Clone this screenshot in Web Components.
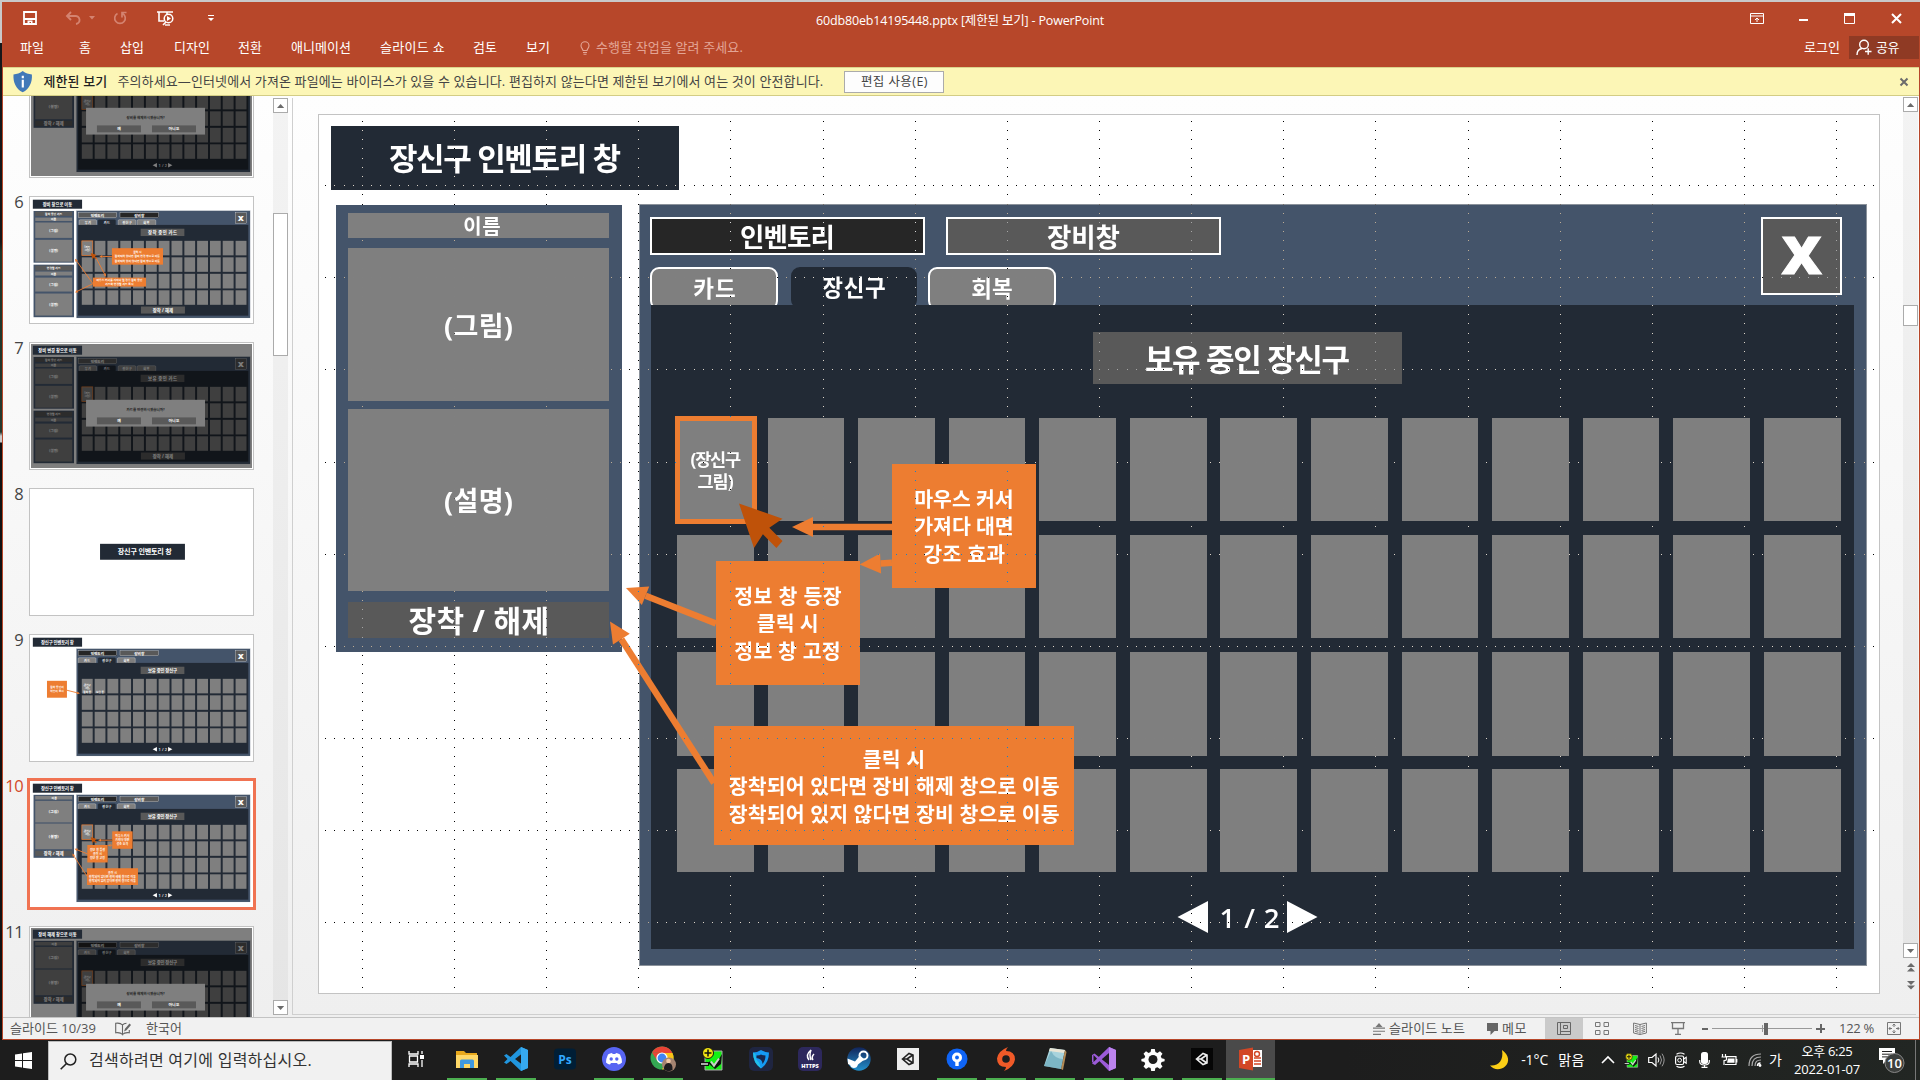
<!DOCTYPE html>
<html lang="ko">
<head>
<meta charset="utf-8">
<title>PowerPoint</title>
<style>
html,body{margin:0;width:1920px;height:1080px;overflow:hidden;background:#1e1e1e}
body{font-family:"Open Sans","Noto Sans CJK KR",sans-serif;font-size:13px;color:#444}
</style>
</head>
<body>
<desk-top></desk-top>
<script>
const fits=[];
const define=(name,html,setup)=>customElements.define(name,class extends HTMLElement{
  connectedCallback(){
    if(this.shadowRoot)return;
    const r=this.attachShadow({mode:'open'});
    r.innerHTML=typeof html==='function'?html(this):html;
    if(setup)setup(this,r);
  }
});

/* Label with a set width: the letter spacing is spread to fill it. */
define('ui-text',el=>`<style>:host{display:block;flex:none;white-space:nowrap;line-height:20px;
 width:${el.getAttribute('w')}px;margin-left:${el.getAttribute('gap')||0}px}span{display:inline-block}</style><span><slot></slot></span>`,
 (el,r)=>fits.push(()=>{
  el.style.letterSpacing='0px';
  const w=r.querySelector('span').getBoundingClientRect().width,t=el.textContent;
  el.style.letterSpacing=((+el.getAttribute('w')-w)/t.length).toFixed(3)+'px';
 }));

/* Icon library, each drawn in its own box. */
const ICONS={
 save:[14,14,`<path d="M1 1h12v12H1zM1 8h12" fill="none" stroke="#fff" stroke-width="1.8"/><path d="M4.500 9.500h5V13H8v-2H6.500v2h-2z" fill="#fff"/>`],
 undo:[16,14,`<path d="M2 5h8a4 4 0 0 1 1 8M6 1L2 5l4 4" fill="none" stroke="#d48370" stroke-width="1.9"/>`],
 tri:[6,4,`<path d="M0 0h6L3 3.500z" fill="#d48370"/>`],
 redo:[14,14,`<path d="M4.500 2.500a5.300 5.300 0 1 0 5 0M9 6.500V1.500h4.500" fill="none" stroke="#d48370" stroke-width="1.7"/>`],
 present:[18,15,`<path d="M0 1h16M2 1v9h5M10 1v2M6 14l3-3" fill="none" stroke="#fff" stroke-width="1.6"/><circle cx="11.500" cy="7.500" r="4.300" fill="none" stroke="#fff" stroke-width="1.5"/><path d="M10 5l4 2.500-4 2.500z" fill="#fff"/><path d="M8 14h5" stroke="#fff" stroke-width="1.4"/>`],
 more:[6,6,`<path d="M0 0h6v1H0zM0 3h6L3 6z" fill="#fff"/>`],
 bulb:[10,14,`<path d="M3 9.500C3 8 1 7 1 4.800a4 4 0 0 1 8 0C9 7 7 8 7 9.500zM3 11.500h4M3.500 13.300h3" fill="none" stroke="#e3a596" stroke-width="1.1"/>`],
 ribbon:[14,11,`<path d="M.5.5h13v10H.5zM.5 3h13" fill="none" stroke="#fff"/><path d="M7 9V5M5 7l2-2 2 2" fill="none" stroke="#fff"/>`],
 min:[10,11,`<path d="M0 6h9v2H0z" fill="#fff"/>`],
 max:[11,11,`<path d="M.5.5h10v10H.5z" fill="none" stroke="#fff"/><path d="M0 0h11v3H0z" fill="#fff"/>`],
 close:[11,11,`<path d="M1 1l9 9M10 1l-9 9" stroke="#fff" stroke-width="2"/>`],
 person:[16,17,`<circle cx="8" cy="5.500" r="4.300" fill="none" stroke="#fff" stroke-width="1.400"/><path d="M1 16c0-4 2-6 5-6.500M9 12.500h6.500M12.200 9.300v6.500" fill="none" stroke="#fff" stroke-width="1.400"/>`],
 shield:[20,22,`<path d="M10 0c3 2.500 6 3.200 9.500 3.500C20 12 17 18 10 22 3 18 0 12 .5 3.500 4 3.200 7 2.500 10 0z" fill="#4179b8"/><path d="M9 5h2.200v2.400H9zM9 9h2.200v8H9z" fill="#fff"/>`],
 x2:[10,10,`<path d="M1.500 1.500l7 7M8.500 1.500l-7 7" stroke="#6b6b6b" stroke-width="2"/>`],
 up:[9,5,`<path d="M4.500 0L9 5H0z" fill="#6b6b6b"/>`],
 down:[9,5,`<path d="M0 0h9L4.500 5z" fill="#6b6b6b"/>`],
 up2:[8,9,`<path d="M4 0l4 4H0zM4 4.500l4 4H0z" fill="#6b6b6b"/>`],
 down2:[8,9,`<path d="M0 0h8L4 4zM0 4.500h8l-4 4z" fill="#6b6b6b"/>`],
 proof:[16,14,`<path d="M7.500 3C6 1.300 3 1 .7 1.300v9.500c2.300-.3 5.300 0 6.800 1.700V3c1-1.200 2.500-1.700 4-1.800M7.500 12.500c1.500-1.700 4.500-2 6.800-1.700V8" fill="none" stroke="#666" stroke-width="1.1"/><path d="M9 9.500l1-2.800L14.500 1.500 16 3l-4.500 5.300z" fill="#666"/>`],
 notes:[12,12,`<path d="M6 0l3.500 4h-7zM0 4.500h12v1.200H0zM0 7.700h12v1.100H0zM0 10.800h8V12H0z" fill="#777"/>`],
 memo:[13,12,`<path d="M1 0h11v8H8.500L4.500 12V8H1z" fill="#666"/>`],
 normal:[14,13,`<path d="M.5.500h13v12H.5zM3.500.500v12M3.500 9.500h10M6.500 3.500h4v3h-4z" fill="none" stroke="#666"/>`],
 sorter:[14,13,`<path d="M.5.500h4.500v4H.5zM9 .500h4.500v4H9zM.5 8.500h4.500v4H.5zM9 8.500h4.500v4H9z" fill="none" stroke="#777"/>`],
 reading:[14,13,`<path d="M7 2.500L.6 1v10L7 12.500 13.400 11V1zM7 2.500v10M2 3.500l3.500 1M2 5.500l3.500 1M2 7.500l3.500 1M2 9.300l3.500 1M12 3.500l-3.500 1M12 5.500l-3.500 1M12 7.500l-3.500 1M12 9.300l-3.500 1" fill="none" stroke="#777"/>`],
 show:[14,13,`<path d="M0 .7h14M1.500.700v5.800h11V.700M7 6.500v5.500M4 12.300h6" fill="none" stroke="#777" stroke-width="1.300"/>`],
 fitw:[14,13,`<path d="M.5.500h13v12H.5z" fill="none" stroke="#777"/><path d="M7 2v3M5.500 3.500L7 2l1.500 1.500M7 11V8M5.500 9.500L7 11l1.500-1.500M2 6.500h3M3.300 5L2 6.500 3.300 8M12 6.500H9M10.700 5L12 6.500 10.700 8" fill="none" stroke="#777"/>`],
 win:[17,17,`<path d="M0 2.400L7 1.400v6.700H0zM8 1.200L17 0v8.100H8zM0 9h7v6.600L0 14.600zM8 9h9v8L8 15.800z" fill="#fff"/>`],
 search:[17,17,`<circle cx="10.300" cy="6.500" r="5.500" fill="none" stroke="#222" stroke-width="1.500"/><path d="M6.500 10.500L.7 16.300" stroke="#222" stroke-width="1.600"/>`],
 taskview:[17,16,`<path d="M1 0v3h9V0M1.500 5h8v6h-8zM1 16v-3h9v3M14 0v3M14 9v7" fill="none" stroke="#fff" stroke-width="1.300"/><path d="M12 4h4v4h-4z" fill="#fff"/>`],
 folder:[24,24,`<path d="M1 4h8l2 2h11v14H1z" fill="#e8a81c"/><path d="M1 8h22v13H1z" fill="#ffd867"/><path d="M5 21v-7q0-1.500 1.500-1.500h11Q19 12.500 19 14v7h-4v-4H9v4z" fill="#3f98e0"/>`],
 vscode:[24,24,`<path d="M17 0l7 3v18l-7 3L6.500 14 2.500 17 0 15.500 3.500 12 0 8.500 2.500 7l4 3zM17.500 7L11 12l6.500 5z" fill="#2196de"/><path d="M17 0l7 3v18l-7 3z" fill="#36a9f0"/>`],
 ps:[24,24,`<rect x="1" y="1.500" width="22" height="21" rx="4" fill="#001e36"/><text x="12" y="16.500" text-anchor="middle" font-family="Open Sans" font-weight="700" font-size="12" fill="#31a8ff">Ps</text>`],
 discord:[24,24,`<circle cx="12" cy="12" r="12" fill="#5865f2"/><path d="M6 7.500Q8 6.200 10 6l.7 1h2.600L14 6q2 .2 4 1.500 2 4 2 8-2 2-4 2l-1-1.500H9L8 17.500q-2 0-4-2 0-4 2-8z" fill="#fff"/><circle cx="9.200" cy="12" r="1.700" fill="#5865f2"/><circle cx="14.800" cy="12" r="1.700" fill="#5865f2"/>`],
 chrome:[26,26,`<circle cx="12" cy="12" r="11.500" fill="#34a853"/><path d="M2 6.500A11.500 11.500 0 0 1 22.500 7H12z" fill="#ea4335"/><path d="M22.500 7A11.500 11.500 0 0 1 12 23.500l4.500-9L12 7z" fill="#fbc116"/><path d="M2 6.500L7.500 15 12 7z" fill="#ea4335"/><circle cx="12" cy="12" r="5.600" fill="#fff"/><circle cx="12" cy="12" r="4.400" fill="#4285f4"/><circle cx="19" cy="18.500" r="7" fill="#a58471"/><circle cx="18.500" cy="15" r="2.300" fill="#efc7a6"/><path d="M14 23.500q0-6.500 4.500-6.500t4 7q-4 2.500-8.500-.5z" fill="#1d1c20"/>`],
 vnc:[24,24,`<path d="M5 4h17v19H5z" fill="#14f014" stroke="#aaa"/><circle cx="8" cy="6" r="5.500" fill="#f3e513" stroke="#111"/><path d="M8 2.500v7M4.500 6h7" stroke="#111" stroke-width="1.500"/><path d="M0 15h9v4H0z" fill="#111"/><path d="M1 17h7" stroke="#fff" stroke-width="1.300"/><path d="M9 14l5 6.500L22 7l-1 10-6 5-6-5z" fill="#111"/><path d="M11 14.500l3 4 5-7" stroke="#ccc" stroke-width="2" fill="none"/>`],
 guard:[24,24,`<rect width="24" height="24" rx="5" fill="#1f2541"/><path d="M12 3q4 2.500 8 2.500Q20 16 12 21.500 4 16 4 5.500 8 5.500 12 3z" fill="#159af5"/><path d="M7.500 8.500Q11 8.500 12 7.500q1 1 4.500 1 0 5-3 8.500 0-5-6-6z" fill="#17264d"/><path d="M4 5.500Q4 16 12 21.500l-2-6Q6 12 6.500 7z" fill="#25c9e9" opacity=".8"/>`],
 https:[24,24,`<rect width="24" height="24" rx="5" fill="#2d285c"/><path d="M11 13Q7 8 13 3q-2 5 0 10M15 13q-2-3 1-6" stroke="#fff" stroke-width="1.500" fill="none"/><text x="12" y="20.500" text-anchor="middle" font-family="Open Sans" font-weight="800" font-size="5.600" fill="#fff">HTTPS</text>`],
 steam:[24,24,`<defs><linearGradient id="a" x2="0" y2="1"><stop stop-color="#12255b"/><stop offset="1" stop-color="#2290cc"/></linearGradient></defs><circle cx="12" cy="12" r="11.700" fill="url(#a)"/><circle cx="16.500" cy="8.500" r="4" fill="none" stroke="#fff" stroke-width="2"/><path d="M.5 11.500L8 14.500l5-6 4.500 4-6.500 5q-1 3.500-4 3.500-3 0-4-3l-2-1z" fill="#fff"/>`],
 unity:[24,24,`<path d="M1 1h22v22H1z" fill="#eee"/><path d="M6.500 12L13 6.500 17 8v8l-4 1.500zM11 12h-4M11 12l5-3.500M11 12l5 3.500" fill="none" stroke="#222" stroke-width="1.600"/>`],
 unityd:[24,24,`<path d="M1 1h22v22H1z" fill="#060606"/><path d="M6.500 12L13 6.500 17 8v8l-4 1.500zM11 12h-4M11 12l5-3.500M11 12l5 3.500" fill="none" stroke="#eee" stroke-width="1.600"/>`],
 tree:[24,24,`<circle cx="12" cy="12" r="10.500" fill="#0f64f5"/><circle cx="12" cy="10.500" r="5" fill="#fff"/><path d="M10.300 13h3.400v6h-3.400z" fill="#fff"/><circle cx="12" cy="10.500" r="1.900" fill="#0f64f5"/>`],
 origin:[24,24,`<path d="M14 0q-2 2-2 4 9 0 9 8.500Q20 20 10 24q2-2 2-4Q3 20 3 11.500 4 4 14 0z" fill="#f05a28"/><circle cx="12" cy="12" r="3.800" fill="#1e1e1e"/>`],
 notepad:[24,24,`<path d="M7 1l15 2-4 19L1 19z" fill="#a7d3dc"/><path d="M7 1l15 2-1 3L6 4z" fill="#e9e5d5"/><path d="M22 3l1.500 2L20 23l-2-1z" fill="#b48b55"/><path d="M1 19l17 3L20 12Q12 12 8 4z" fill="#5b9fb2" opacity=".55"/>`],
 vs:[24,24,`<path d="M17 0l7 3v18l-7 3L1.500 8v8.500L0 15V8l2.500-1.500L17 18V6L3 18l-3-1.500L17 0z" fill="#9b5bd8"/><path d="M17 0l7 3v18l-7 3z" fill="#bc83ee"/>`],
 gear:[24,24,`<path d="M10.200 2h3.600l.6 3 2 .9 2.600-1.700 2.500 2.500-1.700 2.600.8 2 3 .6v2.400l-3 .6-.8 2 1.700 2.600-2.500 2.500-2.600-1.700-2 .8-.6 3h-3.600l-.6-3-2-.8-2.600 1.700-2.500-2.500 1.700-2.600-.8-2-3-.6v-2.400l3-.6.8-2-1.700-2.600L5 4.200l2.600 1.700 2-.9z" fill="#fff"/><circle cx="12" cy="12.500" r="4.500" fill="#1e1e1e"/>`],
 ppt:[24,24,`<path d="M13 3h10v17H13z" fill="#fff"/><path d="M15 11h7M15 14h7M15 17h7" stroke="#d24726" stroke-width="1.500"/><circle cx="18" cy="7" r="2.500" fill="none" stroke="#d24726" stroke-width="1.400"/><path d="M0 3L14 .5v23L0 21z" fill="#d24726"/><text x="7" y="17" text-anchor="middle" font-family="Open Sans" font-weight="700" font-size="13" fill="#fff">P</text>`],
 moon:[19,20,`<path d="M12 0c7 5 8 12 3 16.500-4.500 4-11.500 3.500-15-1 8 1 14-5 12-15.500z" fill="#fccf16"/>`],
 chev:[14,8,`<path d="M1 7l6-6 6 6" fill="none" stroke="#fff" stroke-width="1.600"/>`],
 speaker:[17,14,`<path d="M.7 4.500H4L8 1v12L4 9.500H.7z" fill="none" stroke="#fff" stroke-width="1.200"/><path d="M10 4.500q1.700 2.500 0 5" fill="none" stroke="#fff"/><path d="M12 2.500q3 4.500 0 9M14 .7q4.300 6.300 0 12.600" fill="none" stroke="#999"/>`],
 cam:[12,16,`<rect x=".6" y="4" width="8" height="8.500" rx="1.500" fill="none" stroke="#fff" stroke-width="1.200"/><path d="M8.600 7l2.600-1.700v6L8.600 9.500M1.500 2.300Q5.500-.3 9.500 2.300M1.500 14.200q4 2.400 8 0" fill="none" stroke="#fff" stroke-width="1.100"/><circle cx="4.600" cy="8.200" r="1.900" fill="none" stroke="#fff"/>`],
 mic:[11,16,`<rect x="2" y="0" width="7" height="12" rx="2.500" fill="#fff"/><path d="M.7 8v1.500q0 3.500 4.800 3.500t4.800-3.500V8M5.500 12.500V15M2.500 15.300h6" fill="none" stroke="#fff" stroke-width="1.200"/>`],
 batt:[17,12,`<path d="M5 2.700h10v7.800H4M15.800 5v3.500M1.500 0v2.500M4.500 0v2.500M.5 3h5v2.500q0 1-2.500 1.200V11" fill="none" stroke="#fff" stroke-width="1.200"/><path d="M7 4.500h6.500v4.300H6z" fill="#fff"/>`],
 wifi:[14,14,`<path d="M1 13Q1 1 13 1M4 13Q4 4 13 4M7 13Q7 7 13 7" fill="none" stroke="#aaa" stroke-width="1.200"/><path d="M9.500 13q0-3 3-3" fill="none" stroke="#fff" stroke-width="1.500"/><circle cx="12" cy="12.500" r="1.400" fill="#fff"/>`],
 action:[26,26,`<path d="M1 1h16v12H9l-4 4v-4H1z" fill="#fff"/><path d="M4 4.500h10M4 7.200h10M4 9.900h10" stroke="#222"/><circle cx="16.500" cy="16" r="9.500" fill="#3c3f3d" stroke="#888"/><text x="16.500" y="20.800" text-anchor="middle" font-family="Open Sans" font-weight="600" font-size="13" fill="#fff">10</text>`]
};
define('ui-icon',el=>{
 const [w,h,body]=ICONS[el.getAttribute('name')],s=el.getAttribute('s')||1;
 return `<style>:host{display:block;flex:none;margin-left:${el.getAttribute('gap')||0}px}svg{display:block;overflow:visible}</style><svg width="${w*s}" height="${h*s}" viewBox="0 0 ${w} ${h}">${body}</svg>`;
});

/* ---------- slide drawings ---------- */
const OR='#ed7d31';
const R=(x,y,x2,y2,f,ex='')=>`<rect x="${x}" y="${y}" width="${x2-x}" height="${y2-y}" fill="${f}" ${ex}/>`;
const T=(s,x,x2,cy,size,o={})=>`<text x="${(x+x2)/2}" y="${cy+size*.375}" font-size="${size}" text-anchor="middle" textLength="${x2-x+size*.07}" fill="${o.fill||'#fff'}" font-weight="${o.w||700}">${s}</text>`;
const C=(s,cx,cy,size,o={})=>`<text x="${cx}" y="${cy+size*.375}" font-size="${size}" text-anchor="middle" fill="${o.fill||'#fff'}" font-weight="700">${s}</text>`;
const box=(x,y,x2,y2,f)=>R(x+1,y+1,x2-1,y2-1,f,'stroke="#fff" stroke-width="2"');
const arrow=(x1,y1,x2,y2)=>{
 const a=Math.atan2(y2-y1,x2-x1),c=Math.cos(a),s=Math.sin(a),bx=x2-21*c,by=y2-21*s;
 return `<path d="M${x1} ${y1}L${bx} ${by}" stroke="${OR}" stroke-width="6.500"/><path d="M${x2} ${y2}L${bx-10*s} ${by+10*c}L${bx+10*s} ${by-10*c}z" fill="${OR}"/>`;
};
const tab=(x,x2,label,a,b,on,cy=289)=>`<rect x="${x+1}" y="268" width="${x2-x-2}" height="${on?40:41}" rx="8" fill="${on?'#222a35':'#7f7f7f'}" stroke="${on?'#222a35':'#fff'}" stroke-width="2"/>`+T(label,a,b,cy,22.500);
const shell=(o)=>{
 let s=R(639.5,204.5,1866.500,965.500,'#44546a','stroke="#8b929b"');
 s+=box(650,217,925,255,o.invOn?'#262626':'#595959')+T('인벤토리',741,834,237.500,26.500);
 if(!o.noEquip)s+=box(946,217,1221,255,o.eqOn?'#262626':'#595959')+T('장비창',1048,1119,237.500,26.500);
 if(o.four)s+=tab(657,782,'무기',699,741)+tab(791,917,'카드',833,875,1)+tab(933,1060,'장신구',965,1028)+tab(1067,1201,'회복',1112,1154);
 else s+=tab(650,778,'카드',694,735)+tab(791,917,'장신구',823,885,1,287.500)+tab(928,1056,'회복',972,1012);
 s+=R(651,305,1854,949,'#222a35');
 s+=box(1761,217,1842,295,'#595959')+`<text x="1801.700" y="274" text-anchor="middle" font-size="52" font-weight="800" textLength="40" lengthAdjust="spacingAndGlyphs" stroke="#fff" stroke-width="1" fill="#fff">X</text>`;
 s+=R(1093,332,1402,384,'#595959')+T(o.head||'보유 중인 장신구',1146,1349,359.500,31);
 const rows=[[418,521],[535,638],[652,756],[769,872]];
 for(const [a,b] of rows)for(let i=0;i<13;i++){const x=677+i*90.570;s+=R(Math.round(x),a,Math.round(x+76.700),b,'#7f7f7f')}
 if(o.four)s+=R(1095,884,1406,934,'#595959')+C('장착 / 해제',1250,908,31);
 else s+=`<path d="M1177.500 917L1208 901v32zM1317.500 917L1287 901v32z" fill="#fff"/>`+`<text x="1249.500" y="928" font-size="27.500" text-anchor="middle" textLength="60" fill="#fff" font-weight="600">1 / 2</text>`;
 if(o.sel!==false)s+=R(677.5,418.500,754.500,521.500,'none',`stroke="${OR}" stroke-width="5"`);
 return s+(o.four?C('(카드',716,459,18)+C('그림)',716,481,18):T('(장신구',691,740.500,459,17.500)+T('그림)',698,733,481,17.500));
};
const title=s=>R(331,126,679,190,'#222a35')+(s==='장신구 인벤토리 창'?T(s,390,620,158.500,31):C(s,505,158.500,30));
const leftOne=()=>R(336,205,622,652,'#44546a')+R(348,213,609,238,'#7f7f7f')+T('이름',464,500,226,20)+R(348,248,609,401,'#7f7f7f')+T('(그림)',445,512,325.500,27)+R(348,409,609,591,'#7f7f7f')+T('(설명)',445,512,500.500,27)+R(348,602,609,638,'#595959')+T('장착 / 해제',409.500,548,620.500,30);
const leftTwo=()=>[[206,573,'장착 중인 카드',211,241,253,277,288,397,411,566],[587,960,'변경할 카드',594,629,636,664,679,778,792,948]].map(v=>
 R(336,v[0],622,v[1],'#44546a')+R(348,v[3],609,v[4],'#595959')+C(v[2],478,(v[3]+v[4])/2,20)+R(348,v[5],609,v[6],'#7f7f7f')+C('이름',478,(v[5]+v[6])/2,20)+R(348,v[7],609,v[8],'#7f7f7f')+C('(그림)',478,(v[7]+v[8])/2,25)+R(348,v[9],609,v[10],'#7f7f7f')+C('(설명)',478,(v[9]+v[10])/2,25)).join('');
const cursor=`<path d="M739 503.500L782.500 518.700 769.300 527.700 782.500 541 776.400 548 762.900 534.300 754 548z" fill="#bf5209"/>`;
const dim=(t,q)=>R(318,114,1880,994,'#000','opacity=".5"')+title(t)+R(707,510,1548,700,'#7f7f7f')+C(q,1128,578,25,{fill:'#222'})+R(784,635,1095,684,'#595959')+C('예',940,659,28)+R(1173,635,1484,684,'#595959')+C('아니오',1328,659,28);
/* Leaves out the texts of a slide that are scrolled out of the list. */
const between=(svg,a,b)=>svg.replace(/<text x="[^"]*" y="([^"]*)"[^]*?<\/text>/g,(m,y)=>+y<a||+y>b?'':m);
const SLIDES={
 5:()=>between(leftOne()+shell({invOn:1})+dim('장비 해제 창으로 이동','장비를 해제하시겠습니까?'),462,1000),
 6:()=>title('장비 창으로 이동')+leftTwo()+shell({eqOn:1,four:1,head:'장착 중인 카드'})+arrow(890,529,801,529)+arrow(777,538,848,672)+arrow(756,722,629,545)+arrow(756,722,629,784)+cursor+R(890,470,1251,587,OR)+C('클릭 시',1070,498,20)+C('장착되어 있다면 장비 변경 창으로 이동',1070,528,20)+C('장착되어 있지 않다면 장비 창으로 이동',1070,558,20)+R(756,679,1131,743,OR)+C('마우스 커서를 가져다 댈 경우 장착 중인',943,696,20)+C('카드와 변경할 카드 표시',943,726,20),
 7:()=>leftTwo()+shell({four:1,noEquip:1,head:'보유 중인 카드'})+dim('장비 변경 창으로 이동','카드를 변경하시겠습니까?'),
 8:()=>R(806,496,1406,609,'#222a35')+T('장신구 인벤토리 창',933,1312,552,50),
 9:()=>title('장신구 인벤토리 창')+shell({invOn:1,sel:false})+R(431,432,572,552,OR)+C('장착 중인지',502,476,20)+C('아닌지 표시',502,506,20)+arrow(572,499,664,522)+C('장착 중',716,508,19)+C('보유 중',806,508,19),
 10:()=>title('장신구 인벤토리 창')+leftOne()+shell({invOn:1})
  +arrow(892,527,792,527)+arrow(892,562.800,859.600,564.500)+arrow(716,623.500,626,588)+arrow(714,783,610,621.500)+cursor
  +R(892,464,1036,588,OR)+T('마우스 커서',915,1013,499,20.500)+T('가져다 대면',915,1013,526.500,20.500)+T('강조 효과',924,1004.500,554,20.500)
  +R(716,561,860,685,OR)+T('정보 창 등장',735,841,596.300,20.500)+T('클릭 시',757.500,818,623.500,20.500)+T('정보 창 고정',735,840,651,20.500)
  +R(714,726,1074,845,OR)+T('클릭 시',863.500,924.500,759,20.500)+T('장착되어 있다면 장비 해제 창으로 이동',729.500,1059,786.500,20.500)+T('장착되어 있지 않다면 장비 창으로 이동',729.500,1059,814,20.500),
 11:()=>between(leftOne()+shell({invOn:1})+dim('장비 해제 창으로 이동','장비를 해제하시겠습니까?'),0,730)
};
const gridDots=()=>{
 const st=9.213,set=new Set(),row=v=>Math.floor(554.2+v);
 for(let k=-8;k<=8;k++)for(let j=-47;j<=47;j++)set.add(Math.round(1099+k*92.130)+' '+row(j*st));
 for(let k=-4;k<=4;k++)for(let j=-84;j<=84;j++)set.add(Math.round(1099+j*st)+' '+row(k*92.130));
 return `<path style="mix-blend-mode:difference" fill="#fff" shape-rendering="crispEdges" d="${[...set].map(p=>`M${p}h1v1h-1z`).join('')}"/>`;
};
define('slide-picture',el=>{
 const n=el.getAttribute('n'),g=el.hasAttribute('grid');
 return `<style>:host{display:block;background:#fff;overflow:hidden;isolation:isolate}svg{display:block;width:100%;height:100%}text{font-family:"Open Sans","Noto Sans CJK KR",sans-serif}</style>
 <svg viewBox="${g?'319 115 1560 878':'318 114 1562 880'}" preserveAspectRatio="none">${SLIDES[n]()}${g?gridDots():''}</svg>`;
});
define('slide-thumb',el=>{
 const n=el.getAttribute('n'),on=el.hasAttribute('selected');
 return `<style>:host{display:flex;height:128px;margin-bottom:18px}
 b{font:400 16.500px/11px "Open Sans";width:24px;text-align:right;flex:none;color:${on?'#d24726':'#444'};letter-spacing:-.6px;padding:0 4px 0 0;margin-left:-4px}
 .f{width:221px;height:124px;border:1px solid ${on?'#fff':'#c3c3c3'};padding:1px;background:#fff;margin-left:2px;${on?'outline:3px solid #f07352;outline-offset:-1px':''}}
 slide-picture{width:221px;height:124px}</style><b>${el.hasAttribute('bare')?'':n}</b><div class="f"><slide-picture n="${n}"></slide-picture></div>`;
});

/* before = track above the handle, size = handle height */
define('scroll-bar',el=>{
 const g=k=>el.getAttribute(k);
 return `<style>:host{display:flex;flex-direction:column;width:15px;background:linear-gradient(#f3f3f3,#e5e5e5);flex:none}
 .b{box-sizing:border-box;width:15px;height:15px;border:1px solid #ababab;background:#fff;display:flex;align-items:center;justify-content:center}
 .h{box-sizing:border-box;margin-top:${g('before')}px;height:${g('size')}px;border:1px solid #ababab;background:#fff}.s{flex:1}</style>
 <div class="b"><ui-icon name="up" s=".8"></ui-icon></div><div class="h"></div><div class="s"></div><div class="b"><ui-icon name="down" s=".8"></ui-icon></div>`;
});

define('title-bar',`<style>:host{display:block;height:65px;background:#b7472a;color:#fff}
.r{display:flex;align-items:center}.a{box-sizing:border-box;height:34px;padding:0 0 2px 20px}.b{height:23px}
.share{display:flex;align-items:center;margin-left:9px;width:70px;height:23px;background:#8f3a24}
.b ui-text{line-height:18px;padding-bottom:2px}.hint{color:#e3a596}.t{font-size:12.500px;padding-top:5px}</style>
<div class="r a"><ui-icon name="save"></ui-icon><ui-icon name="undo" gap="28"></ui-icon><ui-icon name="tri" gap="8"></ui-icon><ui-icon name="redo" gap="18"></ui-icon><ui-icon name="present" gap="30"></ui-icon><ui-icon name="more" gap="33"></ui-icon>
<ui-text class="t" w="288" gap="602">60db80eb14195448.pptx [제한된 보기] - PowerPoint</ui-text>
<ui-icon name="ribbon" gap="646"></ui-icon><ui-icon name="min" gap="35"></ui-icon><ui-icon name="max" gap="35"></ui-icon><ui-icon name="close" gap="36"></ui-icon></div>
<div class="r b"><ui-text w="24" gap="17">파일</ui-text><ui-text w="12" gap="35">홈</ui-text><ui-text w="24" gap="29">삽입</ui-text><ui-text w="36" gap="30">디자인</ui-text><ui-text w="24" gap="28">전환</ui-text><ui-text w="60" gap="29">애니메이션</ui-text><ui-text w="65" gap="29">슬라이드 쇼</ui-text><ui-text w="24" gap="28">검토</ui-text><ui-text w="24" gap="29">보기</ui-text><ui-icon name="bulb" gap="30"></ui-icon><ui-text class="hint" w="147" gap="6">수행할 작업을 알려 주세요.</ui-text>
<ui-text w="36" gap="1061">로그인</ui-text><div class="share"><ui-icon name="person" gap="7"></ui-icon><ui-text w="23" gap="4">공유</ui-text></div></div>`);

define('message-bar',`<style>:host{display:flex;align-items:center;box-sizing:border-box;height:29px;background:#fcf6b6;border-top:1px solid #dcd48c;border-bottom:1px solid #d3cd85;color:#444}
.btn{box-sizing:border-box;width:100px;height:22px;margin-left:21px;border:1px solid #ababab;background:#fdfdfd;display:flex;align-items:center;justify-content:center;font-size:12.500px}.k{font-weight:500;color:#222}ui-text{margin-top:-1px}.btn ui-text{margin-top:0}</style>
<ui-icon name="shield" gap="10" s=".97"></ui-icon><ui-text class="k" w="64" gap="11">제한된 보기</ui-text><ui-text w="706" gap="10">주의하세요—인터넷에서 가져온 파일에는 바이러스가 있을 수 있습니다. 편집하지 않는다면 제한된 보기에서 여는 것이 안전합니다.</ui-text>
<div class="btn"><ui-text w="67">편집 사용(E)</ui-text></div><ui-icon name="x2" gap="955"></ui-icon>`);

define('work-area',`<style>:host{display:flex;height:921px;background:linear-gradient(#fefefe,#efefef);overflow:hidden}
.list{width:270px;height:921px;overflow:hidden;flex:none}.list slide-thumb:first-child{margin-top:-46px}
.pane{width:1624px;height:917px;margin:2px 0 0 4px;border-left:1px solid #cfcfcf;border-bottom:1px solid #cfcfcf;flex:none;box-sizing:border-box;display:flex}
.left{height:917px;margin-top:2px}
.page{width:1560px;height:878px;border:1px solid #c3c3c3;margin:16px 0 0 25px}
.r{margin-top:1px;width:15px;height:918px;margin-left:-13px;display:flex;flex-direction:column;align-items:center;flex:none}</style>
<div class="list">${[5,6,7,8,9,10,11].map(n=>`<slide-thumb n="${n}" ${n===10?'selected':''} ${n===5?'bare':''}></slide-thumb>`).join('')}</div>
<scroll-bar class="left" before="100" size="143"></scroll-bar>
<div class="pane"><slide-picture class="page" n="10" grid></slide-picture></div>
<div class="r"><scroll-bar style="height:861px" before="193" size="21"></scroll-bar><ui-icon name="up2" style="margin:5px 0 9px"></ui-icon><ui-icon name="down2"></ui-icon></div>`);

define('status-bar',`<style>:host{display:flex;align-items:center;height:21px;background:#f1f1f1;border-top:1px solid #c3c3c3;color:#555}
ui-text{margin-top:-1px}
.on{background:#cacaca;width:38px;height:21px;display:flex;align-items:center;justify-content:center;margin-left:18px}
.z{display:flex;align-items:center;width:100px;height:13px;margin:0 4px;background:linear-gradient(#999,#999) 0 6px/100% 1px no-repeat}.z i{width:1px;height:7px;background:#999;margin-left:50px}.z b{width:4px;height:12px;background:#666;margin-left:1px}
.p{width:9px;height:9px;background:linear-gradient(#666,#666) 0 4px/9px 2px no-repeat,linear-gradient(#666,#666) 4px 0/2px 9px no-repeat}.m{width:6px;height:2px;background:#666;margin-left:17px}</style>
<ui-text w="86" gap="7">슬라이드 10/39</ui-text><ui-icon name="proof" gap="19"></ui-icon><ui-text w="36" gap="15">한국어</ui-text>
<ui-icon name="notes" gap="1191"></ui-icon><ui-text w="76" gap="4">슬라이드 노트</ui-text><ui-icon name="memo" gap="21"></ui-icon><ui-text w="25" gap="3">메모</ui-text>
<div class="on"><ui-icon name="normal"></ui-icon></div><ui-icon name="sorter" gap="12"></ui-icon><ui-icon name="reading" gap="24"></ui-icon><ui-icon name="show" gap="24"></ui-icon><div class="m"></div><div class="z"><i></i><b></b></div><div class="p"></div><ui-text w="35" gap="14">122 %</ui-text><ui-icon name="fitw" gap="13"></ui-icon>`);

define('task-button',el=>`<style>:host{display:flex;width:49px;height:40px;flex:none;flex-direction:column;align-items:center;${el.hasAttribute('active')?'background:#4a4a4a':''}}
div{flex:1;display:flex;align-items:center}i{height:2px;width:${el.hasAttribute('active')?49:40}px;background:${el.hasAttribute('run')?'#4caf50':'transparent'}}</style><div><ui-icon name="${el.getAttribute('icon')}"></ui-icon></div><i></i>`);

define('task-bar',`<style>:host{display:flex;align-items:center;height:40px;background:linear-gradient(90deg,#1d1d1d 70%,#222623);color:#fff}
.s{width:48px;display:flex}.q{box-sizing:border-box;width:344px;height:39px;align-self:flex-end;background:#f1f1f1;border:1px solid #bbb;border-bottom:0;display:flex;align-items:center;color:#333}
.q ui-text{font-size:16px;margin-top:-2px}.sp{flex:1}.t{font-size:14px}.clock{width:66px;margin-left:11px;display:flex;flex-direction:column;align-items:center;font-size:13px}.clock ui-text{line-height:18px}
.e{width:1px;height:40px;background:#777;margin:0 4px 0 11px}</style>
<div class="s"><ui-icon name="win" gap="15"></ui-icon></div>
<div class="q"><ui-icon name="search" gap="11"></ui-icon><ui-text w="223" gap="12">검색하려면 여기에 입력하십시오.</ui-text></div>
<task-button icon="taskview"></task-button><task-button icon="folder" run style="margin-left:1px"></task-button><task-button icon="vscode" run></task-button><task-button icon="ps"></task-button><task-button icon="discord" run></task-button><task-button icon="chrome" run></task-button><task-button icon="vnc"></task-button><task-button icon="guard"></task-button><task-button icon="https"></task-button><task-button icon="steam"></task-button><task-button icon="unity"></task-button><task-button icon="tree" run></task-button><task-button icon="origin" run></task-button><task-button icon="notepad" run></task-button><task-button icon="vs" run></task-button><task-button icon="gear" run></task-button><task-button icon="unityd" run></task-button><task-button icon="ppt" run active></task-button>
<div class="sp"></div>
<ui-icon name="moon"></ui-icon><ui-text class="t" w="27" gap="12">-1°C</ui-text><ui-text class="t" w="27" gap="10">맑음</ui-text><ui-icon name="chev" gap="16"></ui-icon><ui-icon name="vnc" s=".62" gap="9"></ui-icon><ui-icon name="speaker" gap="9"></ui-icon><ui-icon name="cam" gap="10"></ui-icon><ui-icon name="mic" gap="12"></ui-icon><ui-icon name="batt" gap="11"></ui-icon><ui-icon name="wifi" gap="10"></ui-icon><ui-text class="t" w="14" gap="7">가</ui-text>
<div class="clock"><ui-text w="51">오후 6:25</ui-text><ui-text w="66">2022-01-07</ui-text></div>
<ui-icon name="action" gap="18"></ui-icon><div class="e"></div>`);

define('desk-top',`<style>:host{display:block;width:1920px;height:1080px}
.w{box-sizing:border-box;width:1920px;height:1040px;padding-top:2px;display:flex;background:#c9c9c9}
.edge{width:2px;flex:none;background:linear-gradient(#c9c9c9 41px,#15171a 41px,#161616 240px,#1e3528 250px,#26382d 430px,#ccc 434px,#ccc 440px,#111 441px)}
.app{width:1918px;box-sizing:border-box;border-left:1px solid #b7472a;border-right:1px solid #b7472a;border-bottom:1px solid #b7472a;background:#fff;height:1038px}</style>
<div class="w"><div class="edge"></div><div class="app"><title-bar></title-bar><message-bar></message-bar><work-area></work-area><status-bar></status-bar></div></div><task-bar></task-bar>`);

fits.forEach(f=>f());
</script>
</body>
</html>
